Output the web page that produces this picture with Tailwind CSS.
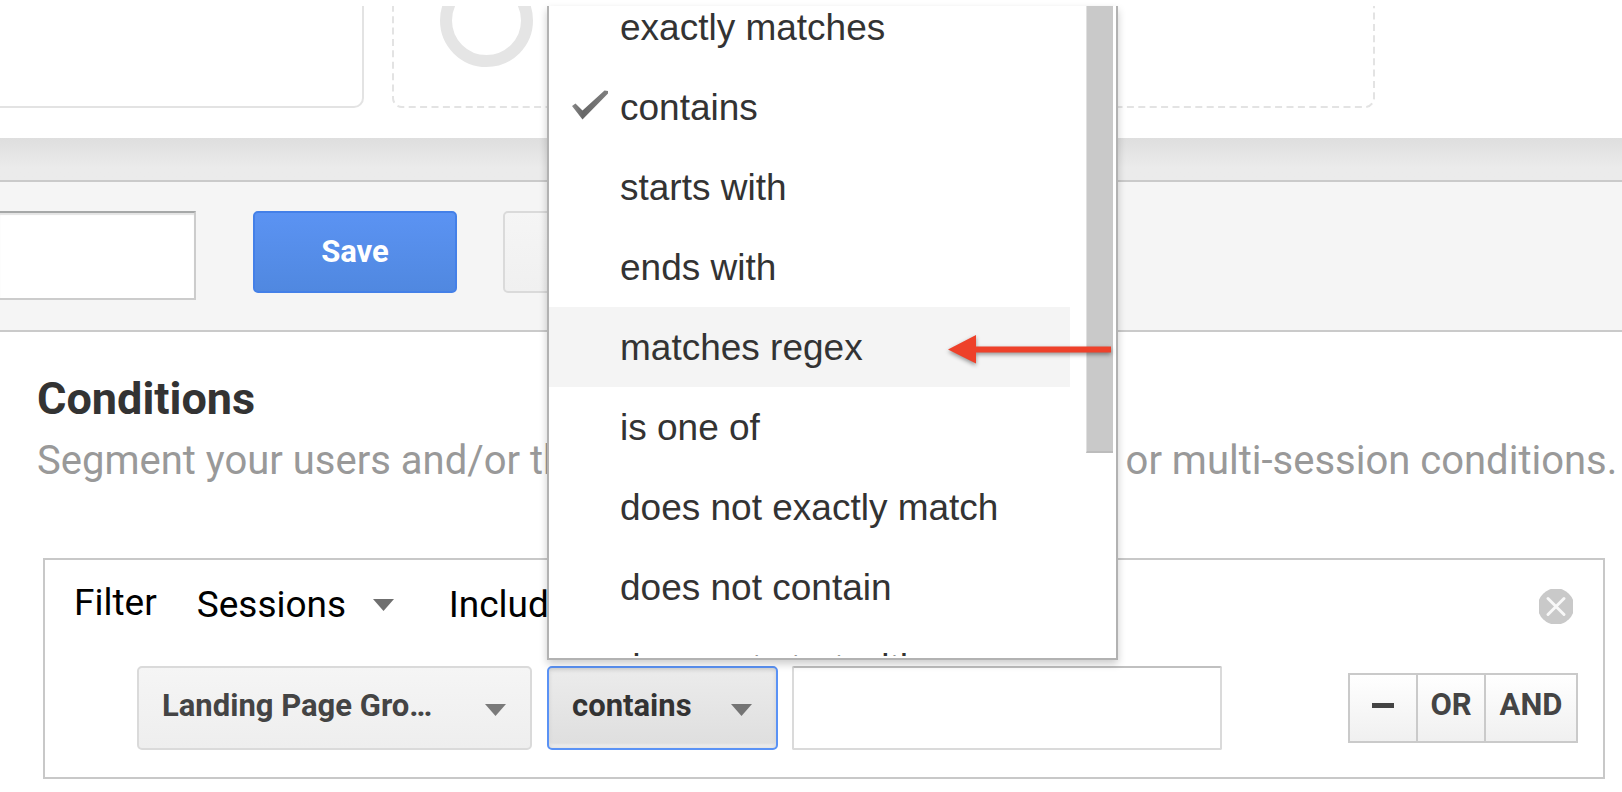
<!DOCTYPE html>
<html lang="en">
<head>
<meta charset="utf-8">
<meta name="viewport" content="width=device-width, initial-scale=1">
<title>Segment conditions</title>
<script src="https://cdn.jsdelivr.net/npm/@tailwindcss/browser@4"></script>
</head>
<body class="bg-white font-['Roboto',sans-serif] text-black pt-[6px] overflow-x-hidden">

<header class="flex gap-[28px] h-[132px] overflow-hidden">
  <div class="w-[364px] h-[102px] border-r-2 border-b-2 border-[#e3e3e3] rounded-br-[10px]"></div>
  <div class="w-[983px] h-[102px] relative">
    <svg class="absolute inset-0 w-full h-full" aria-hidden="true">
      <rect x="1" y="-40" width="981" height="141" rx="9" fill="none" stroke="#e3e3e3" stroke-width="2" stroke-dasharray="7 4.4"/>
    </svg>
    <svg class="ml-[48px] w-[93px] h-[61px]" viewBox="0 0 93 61" aria-hidden="true">
      <circle cx="46.500" cy="14.500" r="40.500" fill="none" stroke="#e5e5e5" stroke-width="12"/>
    </svg>
  </div>
</header>

<div class="h-[42px] bg-linear-to-b from-[#dedede] to-[#ebebeb] to-70%"></div>

<section class="flex items-start h-[152px] pt-[29px] bg-[#f5f5f5] border-y-2 border-[#cacaca]">
  <input type="text" aria-label="Segment name" class="w-[196px] h-[89px] bg-white border-2 border-l-0 border-[#cccccc] border-t-[#a6a8a8] shadow-[inset_0_2px_1px_#e4e4e4] outline-none">
  <button type="button" class="ml-[57px] w-[204px] h-[82px] rounded-[5px] border-2 border-[#4480e8] bg-linear-to-b from-[#5b93f3] to-[#5088e0] text-white font-bold text-[31px] leading-[40px]">Save</button>
  <button type="button" aria-label="Cancel" class="ml-[46px] w-[204px] h-[82px] rounded-[5px] border-2 border-[#dadada] bg-linear-to-b from-[#f5f5f5] to-[#f0f0f0]"></button>
</section>

<main>
  <h1 class="ml-[37px] mt-[39px] font-bold text-[45px] leading-[56px] text-[#333333]">Conditions</h1>
  <p class="flex ml-[37px] mt-[8px] text-[40px] leading-[52px] text-[#999999] whitespace-nowrap">
    <span>Segment your users and/or their sessions according to</span>
    <span>single or multi-session conditions.</span>
  </p>

  <section class="ml-[43px] mr-[17px] mt-[71px] mb-[12px] border-2 border-[#c8c8c8]">
    <div class="flex items-start h-[106px] pt-[17px] pl-[29px] pr-[30px] text-[37px]">
      <span class="leading-[52px]">Filter</span>
      <div class="relative ml-[40px] w-[198px] h-[46px]">
        <select aria-label="Scope" class="appearance-none w-full h-full bg-transparent outline-none"><option>Sessions</option></select>
        <svg class="absolute left-[176px] top-[22px] w-[21px] h-[12px] pointer-events-none" viewBox="0 0 21 12" aria-hidden="true"><path d="M0 0H21L10.500 12Z" fill="#6f6f6f"/></svg>
      </div>
      <div class="relative ml-[54px] w-[180px] h-[46px]">
        <select aria-label="Include or exclude" class="appearance-none w-full h-full bg-transparent outline-none"><option>Include</option></select>
      </div>
      <button type="button" aria-label="Remove filter" class="ml-auto mt-[12px] w-[34px] h-[35px]">
        <svg class="w-full h-full" viewBox="0 0 34 35" aria-hidden="true"><circle cx="17" cy="17.500" r="18.200" fill="#c9c9c9"/><path d="M9 9.500L25 25.500M25 9.500L9 25.500" stroke="#f8f8f8" stroke-width="3" stroke-linecap="round" fill="none"/></svg>
      </button>
    </div>

    <div class="flex items-start pl-[92px] pr-[25px] pb-[27px]">
      <div class="relative w-[395px] h-[84px]">
        <select aria-label="Dimension" class="appearance-none w-full h-full pl-[23px] pb-[4px] rounded-[5px] border-2 border-[#dadada] bg-linear-to-b from-[#f5f5f5] to-[#eeeeee] font-bold text-[31px] text-[#444444] outline-none"><option>Landing Page Gro…</option></select>
        <svg class="absolute left-[348px] top-[38px] w-[21px] h-[12px] pointer-events-none" viewBox="0 0 21 12" aria-hidden="true"><path d="M0 0H21L10.500 12Z" fill="#7a7a7a"/></svg>
      </div>

      <div class="relative ml-[15px] w-[231px] h-[84px]">
        <button type="button" aria-haspopup="listbox" aria-expanded="true" class="flex items-center w-full h-full pl-[23px] pb-[4px] rounded-[5px] border-2 border-[#5a92f5] bg-linear-to-b from-[#ececec] to-[#dedede] shadow-[inset_0_2px_4px_#d0d0d0,inset_0_-4px_2px_#e9e9e9] font-bold text-[31px] text-[#333333]">contains</button>
        <svg class="absolute left-[184px] top-[38px] w-[21px] h-[12px] pointer-events-none" viewBox="0 0 21 12" aria-hidden="true"><path d="M0 0H21L10.500 12Z" fill="#747474"/></svg>

        <div class="absolute left-0 bottom-full mb-[6px] w-[571px] h-[654px] bg-white border-2 border-t-0 border-[#b2b2b2] shadow-[0_4px_8px_rgba(0,0,0,0.2)] font-['Liberation_Sans',Arial,sans-serif] text-[37px] text-[#333333]">
          <div class="h-[650px] overflow-hidden">
            <ul class="-mt-[19px] w-[521px]" aria-label="Match type">
              <li><button type="button" class="block w-full h-[80px] pt-[2px] pl-[71px] text-left">exactly matches</button></li>
              <li><button type="button" class="flex items-center w-full h-[80px] pt-[2px] pl-[23px] text-left"><svg class="w-[37px] h-[30px] mr-[11px] mb-[6px]" viewBox="0 0 37 30" aria-hidden="true"><defs><linearGradient id="tick" x1="0" y1="0" x2="1" y2="0"><stop offset="0" stop-color="#8a8a8a"/><stop offset="0.300" stop-color="#666666"/><stop offset="1" stop-color="#808080"/></linearGradient></defs><path d="M0 16L3.500 13.500L10.500 20.500L32.500 0.500L36 1V3.500L10.500 29.500Z" fill="url(#tick)"/></svg>contains</button></li>
              <li><button type="button" class="block w-full h-[80px] pt-[2px] pl-[71px] text-left">starts with</button></li>
              <li><button type="button" class="block w-full h-[80px] pt-[2px] pl-[71px] text-left">ends with</button></li>
              <li><button type="button" class="block w-full h-[80px] pt-[2px] pl-[71px] text-left bg-[#f4f4f4]">matches regex</button></li>
              <li><button type="button" class="block w-full h-[80px] pt-[2px] pl-[71px] text-left">is one of</button></li>
              <li><button type="button" class="block w-full h-[80px] pt-[2px] pl-[71px] text-left">does not exactly match</button></li>
              <li><button type="button" class="block w-full h-[80px] pt-[2px] pl-[71px] text-left">does not contain</button></li>
              <li><button type="button" class="block w-full h-[80px] pt-[2px] pl-[71px] text-left">does not start with</button></li>
            </ul>
          </div>
          <div class="absolute right-[3px] top-0 w-[27px] h-[447px] bg-[#c9c9c9] border-l border-[#e0e0e0] border-b-2 border-b-[#bcbcbc]"></div>
          <svg class="absolute left-[399px] top-[326px] w-[164px] h-[36px] drop-shadow-[0_2px_2px_rgba(0,0,0,0.4)]" viewBox="0 0 164 36" aria-hidden="true"><path d="M0 17.500L28 3V14.500H163V20.500H28V31.500Z" fill="#ee412a"/></svg>
        </div>
      </div>

      <input type="text" aria-label="Value" class="ml-[14px] w-[430px] h-[84px] bg-white border-2 border-[#dadada] border-t-[#c0c0c0] rounded-[2px] outline-none">

      <div class="ml-auto mt-[7px] flex h-[70px] border-2 border-[#cacaca] bg-linear-to-b from-[#ffffff] to-[#f0f0f0] font-bold text-[31px] text-[#444444] divide-x-2 divide-[#cacaca]">
        <button type="button" aria-label="Remove condition" class="flex items-center justify-center w-[68px]"><svg class="w-[22px] h-[5px] mb-[6px]" viewBox="0 0 22 5" aria-hidden="true"><path d="M0 0H22V5H0Z" fill="#444444"/></svg></button>
        <button type="button" class="w-[68px] pb-[6px]">OR</button>
        <button type="button" class="w-[90px] pb-[6px]">AND</button>
      </div>
    </div>
  </section>
</main>
</body>
</html>
